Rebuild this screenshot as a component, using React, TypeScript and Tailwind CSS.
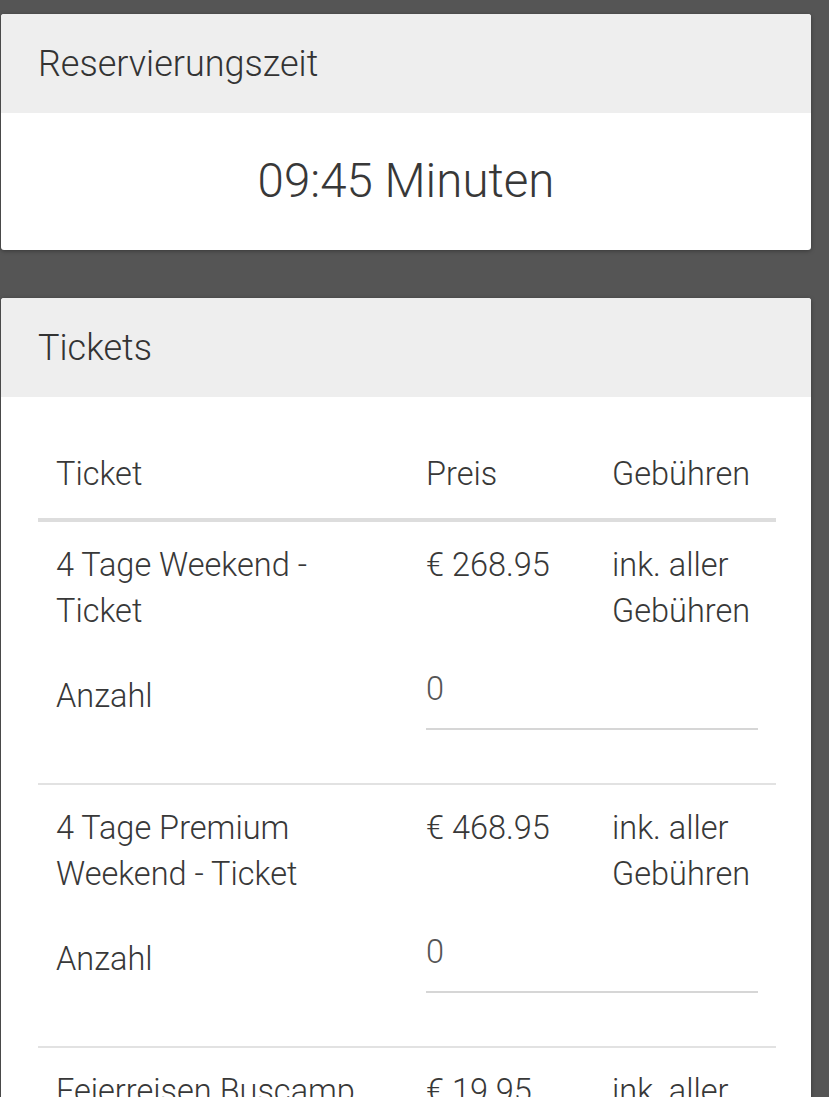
import React from 'react';

type TicketRow = {
  name: React.ReactNode;
  price: string;
  fees: string;
};

const tickets: TicketRow[] = [
  { name: '4 Tage Weekend - Ticket', price: '€ 268.95', fees: 'ink. aller Gebühren' },
  { name: '4 Tage Premium Weekend - Ticket', price: '€ 468.95', fees: 'ink. aller Gebühren' },
  { name: <>Feierreisen Buscamp<br />ing - Ticket</>, price: '€ 19.95', fees: 'ink. aller Gebühren' },
];

function Card({ title, children }: { title: string; children: React.ReactNode }) {
  return (
    <div className="ml-[1px] w-[810px] overflow-hidden rounded-[3px] bg-white shadow-[0_1px_4px_rgba(0,0,0,0.35)]">
      <div className="flex h-[99px] items-center bg-[#eeeeee] px-[37px] text-[36px] text-[#333]">
        {title}
      </div>
      {children}
    </div>
  );
}

export default function App() {
  return (
    <div
      className="min-h-screen overflow-hidden bg-[#555555] pt-[14px] font-light text-[#383838]"
      style={{ fontFamily: '"Roboto Light", Roboto, "Noto Sans", sans-serif' }}
    >
      {/* Reservation timer */}
      <Card title="Reservierungszeit">
        <div className="flex h-[137px] items-center justify-center text-[47.5px]">09:45 Minuten</div>
      </Card>

      <div className="h-[48px]" />

      {/* Tickets */}
      <Card title="Tickets">
        <div className="pl-[37px] pr-[35px] pt-[33px] text-[32.5px] leading-[46px]">
          <div className="grid grid-cols-[370px_186px_183px] border-b-4 border-[#dddddd] pb-[21px] pt-[21px]">
            <div className="px-[18px]">Ticket</div>
            <div className="px-[18px]">Preis</div>
            <div className="px-[18px]">Gebühren</div>
          </div>

          {tickets.map((t, i) => (
            <div key={i} className={`pt-[20px] pb-[53px] ${i > 0 ? 'border-t-2 border-[#e2e2e2]' : ''}`}>
              <div className="grid grid-cols-[370px_186px_183px]">
                <div className="px-[18px]">{t.name}</div>
                <div className="px-[18px]">{t.price}</div>
                <div className="px-[18px]">{t.fees}</div>
              </div>
              <div className="mt-[32px] grid grid-cols-[370px_369px]">
                <div className="px-[18px] pt-[7px]">Anzahl</div>
                <div className="pl-[18px] pr-[19px]">
                  <div className="border-b-2 border-[#d6d6d6] pb-[16px] text-[#555]">0</div>
                </div>
              </div>
            </div>
          ))}
        </div>
      </Card>
    </div>
  );
}
